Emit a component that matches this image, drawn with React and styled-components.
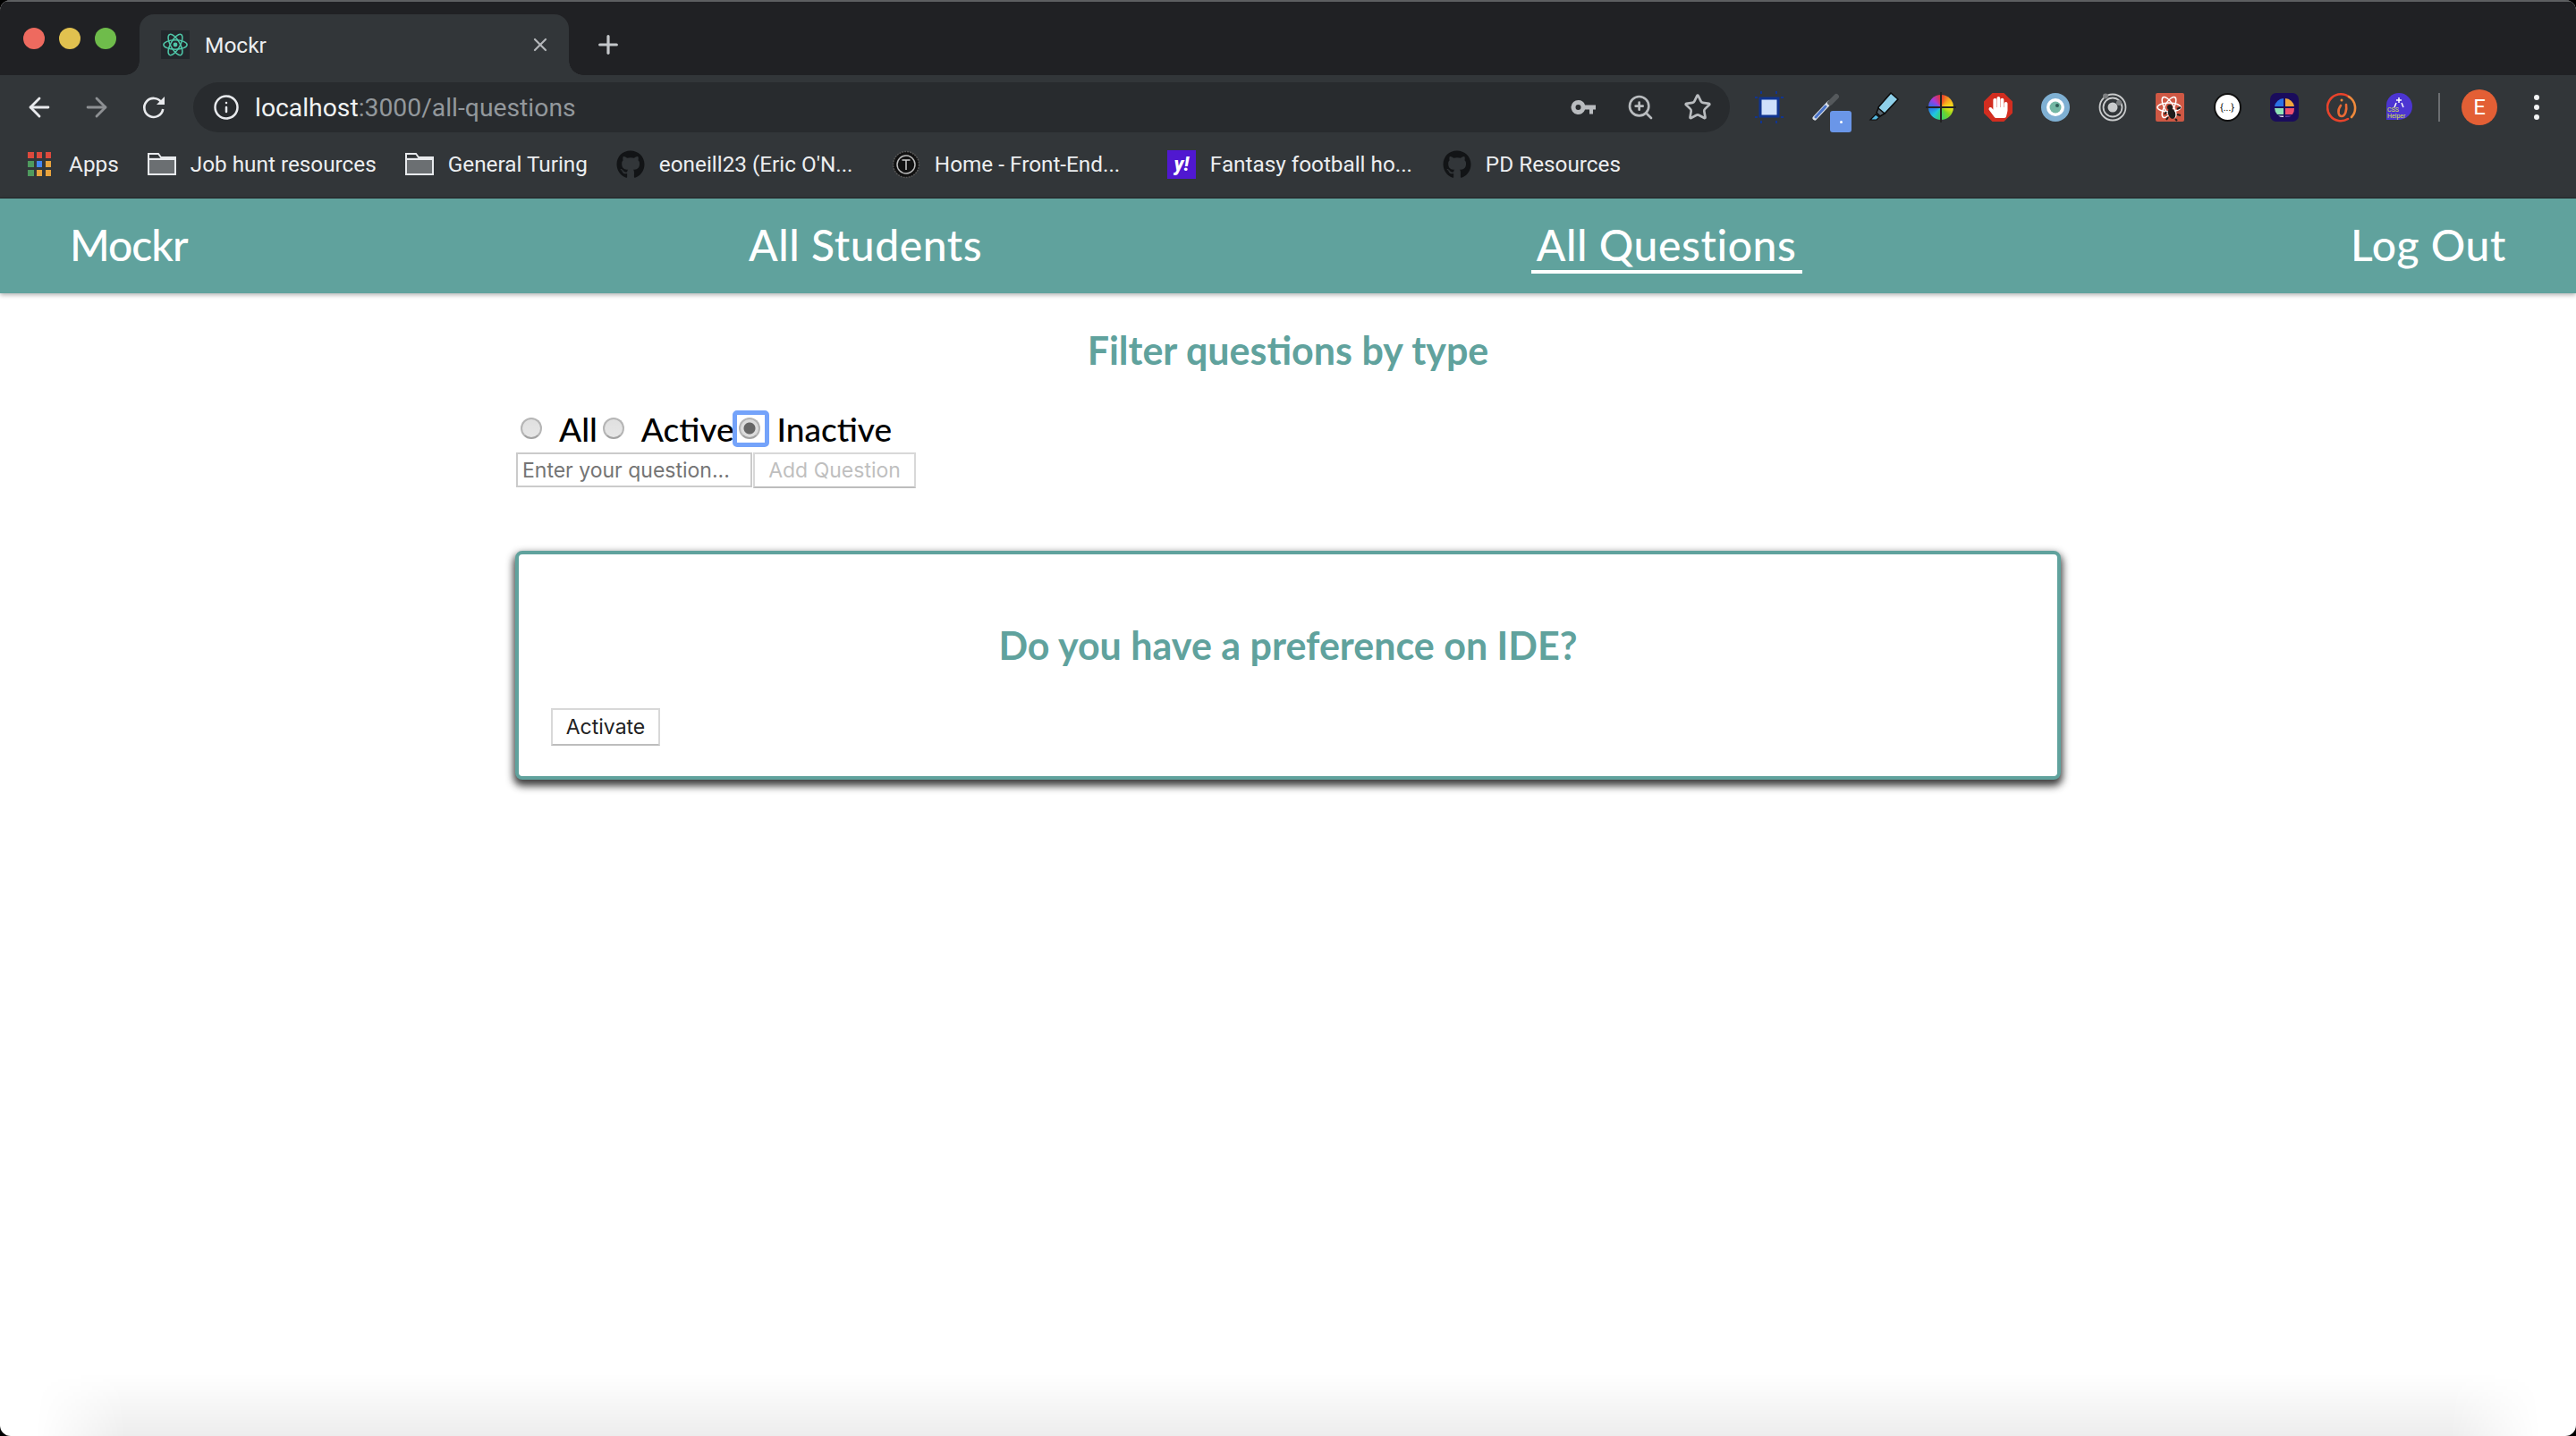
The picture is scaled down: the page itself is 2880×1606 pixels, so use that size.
import React from 'react';
import styled, { createGlobalStyle } from 'styled-components';
import { ArrowLeft, ArrowRight, Info, ZoomIn, Star, X, Plus } from 'lucide-react';
import { FaGithub, FaHandPaper } from 'react-icons/fa';

const TEAL = '#60a29d';
const UI_FONT = '"Roboto", "Liberation Sans", sans-serif';
const DISPLAY_FONT = '"Lato", "Open Sans", sans-serif';
const FORM_FONT = '"Inter", "Liberation Sans", sans-serif';

const GlobalStyle = createGlobalStyle`
    html, body {
        margin: 0;
        padding: 0;
        background: #000;
    }
    * {
        box-sizing: border-box;
    }
`;

//Browser chrome
const Page = styled.div`
    width: 2880px;
    height: 1606px;
    display: flex;
    flex-direction: column;
    background: white;
    border-radius: 12px;
    overflow: hidden;
`;

const TabStrip = styled.div`
    height: 84px;
    flex: none;
    display: flex;
    align-items: flex-end;
    padding-left: 26px;
    background: #202124;
    border-top: 2px solid #5d5f61;
`;

const Lights = styled.div`
    align-self: flex-start;
    display: flex;
    gap: 16px;
    margin-top: 29px;
`;

const Light = styled.span`
    width: 24px;
    height: 24px;
    border-radius: 50%;
    background: ${props => props.$color};
`;

const Tab = styled.div`
    position: relative;
    width: 480px;
    height: 68px;
    margin-left: 26px;
    display: flex;
    align-items: center;
    padding: 0 20px 0 24px;
    background: #323639;
    border-radius: 16px 16px 0 0;
    color: #eceef0;
    font: 400 24.5px ${UI_FONT};

    &::before, &::after {
        content: '';
        position: absolute;
        bottom: 0;
        width: 16px;
        height: 16px;
    }
    &::before {
        left: -16px;
        background: radial-gradient(circle at 0 0, transparent 15.5px, #323639 16px);
    }
    &::after {
        right: -16px;
        background: radial-gradient(circle at 100% 0, transparent 15.5px, #323639 16px);
    }
`;

const Favicon = styled.div`
    width: 32px;
    height: 32px;
    margin-right: 17px;
    display: flex;
    align-items: center;
    justify-content: center;
    background: #23272c;
`;

const TabTitle = styled.span`
    flex: 1;
`;

const NewTab = styled.div`
    align-self: center;
    margin: 14px 0 0 28px;
    display: flex;
    color: #c4c7ca;
`;

const Toolbar = styled.div`
    height: 72px;
    flex: none;
    display: flex;
    align-items: center;
    padding-left: 12px;
    background: #323639;
`;

const ToolButton = styled.div`
    width: 64px;
    flex: none;
    display: flex;
    align-items: center;
    justify-content: center;
    color: ${props => props.$color || '#e8eaed'};
`;

const AddressBar = styled.div`
    width: 1718px;
    height: 56px;
    flex: none;
    margin-left: 12px;
    display: flex;
    align-items: center;
    padding: 0 4px 0 22px;
    border-radius: 28px;
    background: #282b2e;
`;

const Url = styled.div`
    flex: 1;
    margin-left: 17px;
    color: #f1f3f4;
    font: 400 28.3px ${UI_FONT};

    span {
        color: #93989c;
    }
`;

const Extensions = styled.div`
    display: flex;
    margin-left: 12px;
`;

const Extension = styled.div`
    position: relative;
    width: 64px;
    height: 56px;
    display: flex;
    align-items: center;
    justify-content: center;
`;

const Badge = styled.div`
    position: absolute;
    left: 36px;
    top: 32px;
    width: 24px;
    height: 24px;
    display: flex;
    align-items: center;
    justify-content: center;
    border-radius: 3px;
    background: #6a96e8;

    &::after {
        content: '';
        width: 3px;
        height: 3px;
        background: white;
        border-radius: 50%;
    }
`;

const Wheel = styled.div`
    position: relative;
    width: 28px;
    height: 28px;
    border-radius: 50%;
    background: conic-gradient(#e8322c, #f6a11e 12%, #f8e71c 25%, #7ed321 37%, #37d06a 50%, #20c7e0 62%, #2a6fe8 75%, #a33be0 87%, #e8322c);

    &::before {
        content: '';
        position: absolute;
        left: -3px;
        right: -3px;
        top: 13px;
        height: 2px;
        background: #222;
    }
    &::after {
        content: '';
        position: absolute;
        top: -3px;
        bottom: -3px;
        left: 13px;
        width: 2px;
        background: #222;
    }
`;

const StopSign = styled.div`
    width: 32px;
    height: 32px;
    display: flex;
    align-items: center;
    justify-content: center;
    color: white;
    background: #d22d20;
    clip-path: polygon(30% 0, 70% 0, 100% 30%, 100% 70%, 70% 100%, 30% 100%, 0 70%, 0 30%);
`;

const BracesIcon = styled.div`
    width: 31px;
    height: 32px;
    display: flex;
    align-items: center;
    justify-content: center;
    border-radius: 50%;
    background: white;
    border: 2px solid #111;
    color: #111;
    font: 400 11px ${UI_FONT};
    white-space: nowrap;
`;

const Divider = styled.div`
    width: 2px;
    height: 32px;
    margin-left: 12px;
    background: #6b6e71;
`;

const Avatar = styled.div`
    width: 40px;
    height: 40px;
    margin-left: 24px;
    display: flex;
    align-items: center;
    justify-content: center;
    border-radius: 50%;
    background: #e35f35;
    color: white;
    font: 400 24px ${UI_FONT};
`;

const MenuDots = styled.div`
    margin-left: 41px;
    display: flex;
    flex-direction: column;
    gap: 5px;

    span {
        width: 6px;
        height: 6px;
        border-radius: 50%;
        background: #f1f3f4;
    }
`;

const BookmarkBar = styled.div`
    height: 66px;
    flex: none;
    display: flex;
    align-items: center;
    gap: 32px;
    padding: 0 0 10px 31px;
    background: #323639;
    border-bottom: 1px solid #24272a;
`;

const Bookmark = styled.div`
    display: flex;
    align-items: center;
    gap: 16px;
    color: #eceef0;
    font: 400 24.3px ${UI_FONT};
`;

const BookmarkLabel = styled.span`
    width: ${props => props.$width || 'auto'};
    white-space: nowrap;
`;

const AppsGrid = styled.div`
    display: grid;
    grid-template-columns: repeat(3, 6.5px);
    grid-auto-rows: 6.5px;
    gap: 3.3px;
    margin-right: 4px;
`;

const AppDot = styled.span`
    background: ${props => props.$color};
`;

const GitHubMark = styled(FaGithub)`
    width: 32px;
    height: 32px;
    color: #121416;
`;

const YahooIcon = styled.div`
    width: 32px;
    height: 32px;
    display: flex;
    align-items: center;
    justify-content: center;
    background: #5018d0;
    color: white;
    font: italic 800 22px ${UI_FONT};
`;
//end browser chrome

//App styles
const Nav = styled.nav`
    height: 106px;
    flex: none;
    position: relative;
    display: flex;
    justify-content: space-between;
    align-items: center;
    padding: 0 78px;
    background: ${TEAL};
    box-shadow: 0 2px 5px rgba(0, 0, 0, 0.3);
`;

const NavLink = styled.a`
    padding: 0 6px;
    margin: 0 ${props => props.$right || '0'} 0 ${props => props.$left || '0'};
    color: white;
    font: 500 48px ${DISPLAY_FONT};
    letter-spacing: ${props => props.$spacing || '0.6px'};
    border-bottom: 4px solid ${props => (props.$active ? 'white' : 'transparent')};
`;

const Main = styled.main`
    width: 1728px;
    margin: 0 auto;
    flex: 1;
`;

const FilterTitle = styled.h2`
    margin: 43px 0 0;
    color: ${TEAL};
    text-align: center;
    font: 700 43px/42px ${DISPLAY_FONT};
`;

const RadioRow = styled.div`
    display: flex;
    align-items: center;
    height: 46px;
    margin-top: 43px;
    padding-left: 6px;
`;

const RadioWrap = styled.span`
    position: relative;
    display: flex;
    margin-right: 19px;

    ${props => props.$focused && `
        &::after {
            content: '';
            position: absolute;
            inset: -8px -10px -9px -7px;
            border: 5px solid #74a3fa;
            border-radius: 5px;
        }
    `}
`;

const Radio = styled.input.attrs({ type: 'radio' })`
    appearance: none;
    width: 24px;
    height: 24px;
    margin: 0;
    border-radius: 50%;
    border: 2px solid #b5b5b5;
    border-bottom-color: #a2a2a2;
    background: ${props => (props.checked
        ? 'radial-gradient(circle, #666 0 6px, #dcdcdc 7px)'
        : 'linear-gradient(#e0e0e0, #e6e6e6)')};
`;

const RadioLabel = styled.label`
    margin-right: ${props => props.$gap || '6px'};
    color: black;
    font: 500 37px ${DISPLAY_FONT};
`;

const AddForm = styled.form`
    display: flex;
    align-items: flex-start;
    gap: 1px;
    margin-top: 4px;
    padding-left: 1px;
`;

const QuestionInput = styled.input`
    width: 264px;
    height: 39px;
    padding: 0 5px;
    border: 2px solid #cbcbcb;
    font: 400 23px ${FORM_FONT};
    outline: none;

    &::placeholder {
        color: #757575;
    }
`;

const PlainButton = styled.button`
    height: ${props => props.$height};
    width: ${props => props.$width};
    padding: 0;
    background: white;
    border: 2px solid #d8d8d8;
    border-bottom-color: #bdbdbd;
    color: ${props => (props.disabled ? '#bfbfbf' : '#222')};
    font: 400 23px ${FORM_FONT};
`;

const QuestionCard = styled.section`
    height: 256px;
    margin-top: 70px;
    padding: 0 36px 34px;
    display: flex;
    flex-direction: column;
    justify-content: space-between;
    align-items: flex-start;
    border: 4px solid ${TEAL};
    border-radius: 8px;
    background: white;
    box-shadow: 0 5px 8px 2px rgba(30, 30, 30, 0.85);
`;

const QuestionText = styled.h3`
    width: 100%;
    margin: 78px 0 0;
    color: ${TEAL};
    text-align: center;
    font: 700 43px/48px ${DISPLAY_FONT};
`;

const BottomShade = styled.div`
    height: 70px;
    flex: none;
    margin: 0 40px;
    background: linear-gradient(rgba(0, 0, 0, 0), rgba(0, 0, 0, 0.07));
    -webkit-mask-image: linear-gradient(90deg, transparent, black 100px, black calc(100% - 100px), transparent);
    mask-image: linear-gradient(90deg, transparent, black 100px, black calc(100% - 100px), transparent);
`;
//end App styles

const APP_COLORS = ['#dc4a3d', '#dc4a3d', '#dc4a3d', '#4f9a5e', '#4285f4', '#e8a33d', '#4f9a5e', '#e8a33d', '#e8a33d'];

const ReactLogo = ({ size = 30, color = '#4fc6a8' }) => (
    <svg width={size} height={size} viewBox="0 0 32 32" fill="none" stroke={color} strokeWidth="1.6">
        <ellipse cx="16" cy="16" rx="14" ry="5.5" />
        <ellipse cx="16" cy="16" rx="14" ry="5.5" transform="rotate(60 16 16)" />
        <ellipse cx="16" cy="16" rx="14" ry="5.5" transform="rotate(120 16 16)" />
        <circle cx="16" cy="16" r="2.6" fill={color} stroke="none" />
    </svg>
);

const ReloadIcon = () => (
    <svg width="28" height="28" viewBox="0 0 28 28" fill="none">
        <path d="M22.5 8.5A10.5 10.5 0 1 0 24.2 16" stroke="#e8eaed" strokeWidth="2.6" />
        <polygon points="26,2 26,11 17,11" fill="#e8eaed" />
    </svg>
);

const KeyIcon = () => (
    <svg width="28" height="18" viewBox="0 0 28 18">
        <path fillRule="evenodd" fill="#b9bcbf" d="M8.5 1a8 8 0 0 1 7.6 5.5H28v5h-3v5h-4v-5h-4.9A8 8 0 1 1 8.5 1zm0 5a3 3 0 1 0 0 6 3 3 0 0 0 0-6z" />
    </svg>
);

const FolderIcon = () => (
    <svg width="32" height="25" viewBox="0 0 32 25">
        <path d="M1 1h11l3 4h16v19H1z" fill="#6b6f72" stroke="#e8eaed" strokeWidth="2" />
        <path d="M1 7h30" stroke="#e8eaed" strokeWidth="2" />
        <path d="M2 2h9.500l2.500 3.500H2z" fill="#323639" />
    </svg>
);

const TempoIcon = () => (
    <svg width="32" height="32" viewBox="0 0 32 32" fill="none">
        <circle cx="16" cy="16" r="14.500" fill="#111" stroke="#555" strokeWidth="1.500" strokeDasharray="2 1" />
        <circle cx="16" cy="16" r="10" stroke="#bbb" strokeWidth="1.500" />
        <path d="M11.500 11h9M16 11v11" stroke="#ccc" strokeWidth="1.500" />
    </svg>
);

const SelectionIcon = () => (
    <svg width="32" height="36" viewBox="0 0 32 36">
        <rect x="6" y="8" width="20" height="20" fill="#cfe0fb" stroke="#10348f" strokeWidth="3" />
        <g fill="#10348f">
            <rect x="0" y="6" width="3" height="2" /><rect x="29" y="6" width="3" height="2" />
            <rect x="0" y="28" width="3" height="2" /><rect x="29" y="28" width="3" height="2" />
            <rect x="6" y="0" width="2" height="3" /><rect x="23" y="0" width="2" height="3" />
            <rect x="6" y="33" width="2" height="3" /><rect x="23" y="33" width="2" height="3" />
        </g>
    </svg>
);

const DropperIcon = () => (
    <svg width="32" height="32" viewBox="0 0 32 32" fill="none">
        <path d="M3 28L19 11" stroke="#d8dfe8" strokeWidth="5" strokeLinecap="round" />
        <path d="M4 27L15 15" stroke="#4a74c9" strokeWidth="3" strokeLinecap="round" />
        <path d="M20 11l7-7" stroke="#55595c" strokeWidth="6" strokeLinecap="round" />
    </svg>
);

const MarkerIcon = () => (
    <svg width="34" height="34" viewBox="0 0 34 34">
        <path d="M11 17L25 1l8 7-15 16-6 1z" fill="#8ed0ea" stroke="#0b0b0b" strokeWidth="1.500" />
        <path d="M11 18l7 6-5 3-4-4z" fill="#55646e" stroke="#0b0b0b" strokeWidth="1.500" />
        <path d="M8 25l4 3-3 3H2z" fill="#54b7de" stroke="#0b0b0b" strokeWidth="1.200" />
    </svg>
);

const EyeIcon = () => (
    <svg width="32" height="32" viewBox="0 0 32 32">
        <circle cx="16" cy="16" r="16" fill="#7fb0d3" />
        <circle cx="16" cy="16" r="10" fill="white" />
        <circle cx="16" cy="16" r="6.500" fill="#74b8a4" />
        <circle cx="18" cy="14" r="2" fill="#2f5e58" />
    </svg>
);

const RingsIcon = () => (
    <svg width="32" height="32" viewBox="0 0 32 32" fill="none">
        <circle cx="16" cy="16" r="14.500" stroke="#c9cbcc" strokeWidth="1.800" />
        <circle cx="16" cy="16" r="10.500" stroke="#c9cbcc" strokeWidth="1.800" />
        <circle cx="16" cy="16" r="5.500" fill="#c9cbcc" />
        <circle cx="8" cy="3.500" r="3" fill="#7e8082" />
        <circle cx="23" cy="11" r="3" fill="#7e8082" />
    </svg>
);

const ReactBugIcon = () => (
    <svg width="32" height="32" viewBox="0 0 32 32" fill="none">
        <rect width="32" height="32" rx="2" fill="#cf5844" />
        <g stroke="white" strokeWidth="1.500">
            <ellipse cx="15" cy="16" rx="13" ry="5" />
            <ellipse cx="15" cy="16" rx="13" ry="5" transform="rotate(60 15 16)" />
            <ellipse cx="15" cy="16" rx="13" ry="5" transform="rotate(120 15 16)" />
        </g>
        <g fill="#1c1c1c">
            <circle cx="16" cy="16" r="3" />
            <ellipse cx="18" cy="23" rx="4" ry="6" transform="rotate(-20 18 23)" />
        </g>
        <path d="M12 21l-2 3M24 18l4-2M24 24l4 1M22 29l2 2M14 27l-2 3" stroke="#1c1c1c" strokeWidth="2" />
    </svg>
);

const QuadrantIcon = () => (
    <svg width="32" height="32" viewBox="0 0 32 32">
        <rect width="32" height="32" rx="7" fill="#1a0c5c" />
        <path d="M15 6a11 11 0 0 0-10 9h10z" fill="#2b72e6" />
        <path d="M17 6a11 11 0 0 1 10 9H17z" fill="#f0a63c" />
        <path d="M5 17a11 11 0 0 0 3 7h7v-7z" fill="#8fe3b8" />
        <path d="M17 17v7h8a11 11 0 0 0 2-7z" fill="#ee4f6e" />
        <path d="M9 25.500a11 11 0 0 0 6 1.500v-1.500z" fill="#e8e8f0" />
        <path d="M17 25.500V27a11 11 0 0 0 7-1.500z" fill="#5a3fb0" />
    </svg>
);

const SwirlIcon = () => (
    <svg width="34" height="34" viewBox="0 0 34 34" fill="none">
        <path d="M26 6A15 15 0 1 0 24 30" stroke="#e8432b" strokeWidth="2.600" strokeLinecap="round" />
        <path d="M25 5a15 15 0 0 1 3 23" stroke="#ef8a3c" strokeWidth="2.600" strokeLinecap="round" />
        <path d="M16 15c-4 5-3 12 1 12s6-7 5-13" stroke="#ea6a35" strokeWidth="2.600" strokeLinecap="round" />
        <circle cx="17" cy="9" r="1.500" fill="#ef8a3c" />
    </svg>
);

const CssHelperIcon = () => (
    <svg width="30" height="34" viewBox="0 0 30 34">
        <path d="M15 1a14.500 14.500 0 0 1 0 30H1V15A14 14 0 0 1 15 1z" fill="#4c35d2" />
        <path d="M15 6v6M12 12l-2 5M18 12l2 5M12 9h6" stroke="white" strokeWidth="1.500" fill="none" />
        <text x="2" y="22" fontSize="7" fill="#d7e34a" fontFamily="Roboto, sans-serif">CSS</text>
        <text x="2" y="29" fontSize="7" fill="#d7e34a" fontFamily="Roboto, sans-serif">Helper</text>
    </svg>
);

const App = () => {
    return (
        <Page>
            <GlobalStyle />
            <TabStrip>
                <Lights>
                    <Light $color="#ee6a5f" />
                    <Light $color="#e1c14f" />
                    <Light $color="#6fbc4b" />
                </Lights>
                <Tab>
                    <Favicon><ReactLogo /></Favicon>
                    <TabTitle>Mockr</TabTitle>
                    <X size={24} color="#b4b7ba" strokeWidth={2.2} />
                </Tab>
                <NewTab><Plus size={32} strokeWidth={2.4} /></NewTab>
            </TabStrip>

            <Toolbar>
                <ToolButton><ArrowLeft size={34} strokeWidth={2} /></ToolButton>
                <ToolButton $color="#8d9093"><ArrowRight size={34} strokeWidth={2} /></ToolButton>
                <ToolButton><ReloadIcon /></ToolButton>
                <AddressBar>
                    <Info size={30} color="#e8eaed" strokeWidth={2} />
                    <Url>localhost<span>:3000/all-questions</span></Url>
                    <ToolButton><KeyIcon /></ToolButton>
                    <ToolButton $color="#b9bcbf"><ZoomIn size={32} strokeWidth={2} /></ToolButton>
                    <ToolButton $color="#b9bcbf"><Star size={32} strokeWidth={2} /></ToolButton>
                </AddressBar>
                <Extensions>
                    <Extension><SelectionIcon /></Extension>
                    <Extension><DropperIcon /><Badge /></Extension>
                    <Extension><MarkerIcon /></Extension>
                    <Extension><Wheel /></Extension>
                    <Extension><StopSign><FaHandPaper size={24} /></StopSign></Extension>
                    <Extension><EyeIcon /></Extension>
                    <Extension><RingsIcon /></Extension>
                    <Extension><ReactBugIcon /></Extension>
                    <Extension><BracesIcon>{'{...}'}</BracesIcon></Extension>
                    <Extension><QuadrantIcon /></Extension>
                    <Extension><SwirlIcon /></Extension>
                    <Extension><CssHelperIcon /></Extension>
                </Extensions>
                <Divider />
                <Avatar>E</Avatar>
                <MenuDots><span /><span /><span /></MenuDots>
            </Toolbar>

            <BookmarkBar>
                <Bookmark>
                    <AppsGrid>
                        {APP_COLORS.map((color, i) => <AppDot key={i} $color={color} />)}
                    </AppsGrid>
                    <BookmarkLabel>Apps</BookmarkLabel>
                </Bookmark>
                <Bookmark><FolderIcon /><BookmarkLabel>Job hunt resources</BookmarkLabel></Bookmark>
                <Bookmark><FolderIcon /><BookmarkLabel>General Turing</BookmarkLabel></Bookmark>
                <Bookmark><GitHubMark /><BookmarkLabel $width="228px">eoneill23 (Eric O'N...</BookmarkLabel></Bookmark>
                <Bookmark><TempoIcon /><BookmarkLabel $width="228px">Home - Front-End...</BookmarkLabel></Bookmark>
                <Bookmark><YahooIcon>y!</YahooIcon><BookmarkLabel $width="228px">Fantasy football ho...</BookmarkLabel></Bookmark>
                <Bookmark><GitHubMark /><BookmarkLabel>PD Resources</BookmarkLabel></Bookmark>
            </BookmarkBar>

            <Nav>
                <NavLink $left="-6px" $right="8px" $spacing="-1px">Mockr</NavLink>
                <NavLink>All Students</NavLink>
                <NavLink $active>All Questions</NavLink>
                <NavLink $right="-6px">Log Out</NavLink>
            </Nav>

            <Main>
                <FilterTitle>Filter questions by type</FilterTitle>
                <RadioRow>
                    <RadioWrap><Radio name="type" readOnly /></RadioWrap>
                    <RadioLabel>All</RadioLabel>
                    <RadioWrap><Radio name="type" readOnly /></RadioWrap>
                    <RadioLabel $gap="5px">Active</RadioLabel>
                    <RadioWrap $focused><Radio name="type" checked readOnly /></RadioWrap>
                    <RadioLabel>Inactive</RadioLabel>
                </RadioRow>
                <AddForm>
                    <QuestionInput placeholder="Enter your question..." />
                    <PlainButton type="button" disabled $width="182px" $height="40px">Add Question</PlainButton>
                </AddForm>
                <QuestionCard>
                    <QuestionText>Do you have a preference on IDE?</QuestionText>
                    <PlainButton type="button" $width="122px" $height="42px">Activate</PlainButton>
                </QuestionCard>
            </Main>

            <BottomShade />
        </Page>
    );
};

export default App;
